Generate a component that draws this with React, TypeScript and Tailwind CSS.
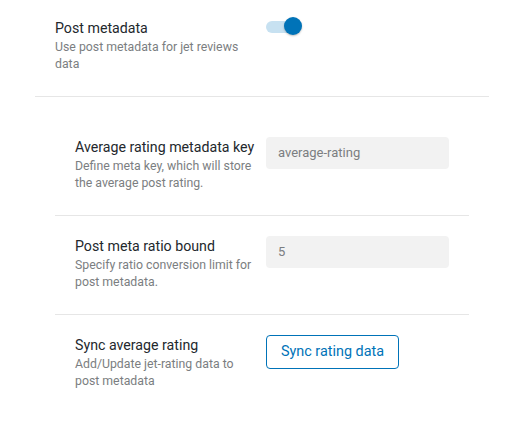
export default function App() {
  const rows = [
    {
      title: 'Average rating metadata key',
      desc: 'Define meta key, which will store the average post rating.',
      value: 'average-rating',
    },
    {
      title: 'Post meta ratio bound',
      desc: 'Specify ratio conversion limit for post metadata.',
      value: '5',
    },
  ]

  return (
    <div className="w-[507px] h-[443px] bg-white font-['Roboto',sans-serif]">
      {/* Interruptor principal */}
      <div className="ml-[35px] w-[454px] border-b border-[#e6e6e6] pl-[20px] pt-[19px] pb-[23px] flex">
        <div className="w-[211px]">
          <div className="text-[14.2px] leading-[18px] text-[#23282d]">Post metadata</div>
          <div className="mt-[2px] w-[184px] text-[12.3px] leading-[17px] text-[#7b7e81]">
            Use post metadata for jet reviews data
          </div>
        </div>
        <div className="relative w-[36px] h-[18px] -mt-[2px]">
          <span className="absolute left-0 top-[4px] w-[30px] h-[12px] rounded-full bg-[#c7e1f1]" />
          <span className="absolute left-[18px] top-0 w-[18px] h-[18px] rounded-full bg-[#0073b8] shadow-[0_1px_2px_rgba(0,0,0,0.25)]" />
        </div>
      </div>

      {/* Ajustes de metadatos */}
      <div className="ml-[55px] w-[414px] pt-[20px]">
        {rows.map((row) => (
          <div key={row.title} className="flex pl-[20px] pt-[20px] pb-[23px] border-b border-[#e6e6e6]">
            <div className="w-[191px] mt-[1px]">
              <div className="whitespace-nowrap text-[14.2px] leading-[18px] text-[#23282d]">{row.title}</div>
              <div className="mt-[2px] w-[184px] text-[12.3px] leading-[17px] text-[#7b7e81]">{row.desc}</div>
            </div>
            <div className="w-[183px] h-[32px] rounded-[4px] bg-[#f2f2f2] pl-[12px] flex items-center text-[13px] text-[#7b7e81]">
              {row.value}
            </div>
          </div>
        ))}
        <div className="flex pl-[20px] pt-[20px]">
          <div className="w-[191px] mt-[1px]">
            <div className="whitespace-nowrap text-[14.2px] leading-[18px] text-[#23282d]">Sync average rating</div>
            <div className="mt-[2px] w-[184px] text-[12.3px] leading-[17px] text-[#7b7e81]">
              Add/Update jet-rating data to post metadata
            </div>
          </div>
          <button className="w-[133px] h-[34px] rounded-[4px] border border-[#0073b8] text-[14.4px] text-[#0073b8] flex items-center justify-center">
            Sync rating data
          </button>
        </div>
      </div>
    </div>
  )
}
